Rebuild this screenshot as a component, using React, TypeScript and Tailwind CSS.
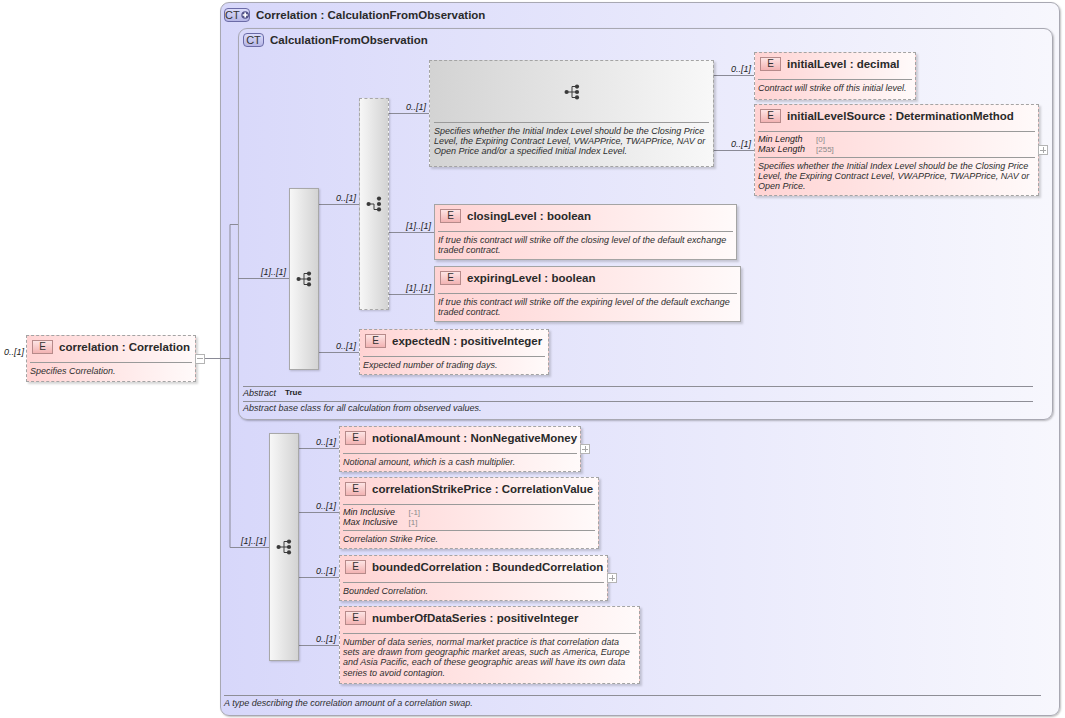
import React from "react";

type Facet = [string, string];

type ElementNode = {
  x: number;
  y: number;
  w: number;
  h: number;
  name: string;
  type: string;
  optional?: boolean;
  facets?: Facet[];
  desc: string[];
  expand?: "plus" | "minus";
};

const elements: ElementNode[] = [
  { x: 26, y: 335, w: 170, h: 47, name: "correlation", type: "Correlation", optional: true, desc: ["Specifies Correlation."], expand: "minus" },
  { x: 754, y: 52, w: 162, h: 48, name: "initialLevel", type: "decimal", optional: true, desc: ["Contract will strike off this initial level."] },
  {
    x: 754, y: 104, w: 285, h: 92, name: "initialLevelSource", type: "DeterminationMethod", optional: true,
    facets: [["Min Length", "[0]"], ["Max Length", "[255]"]],
    desc: [
      "Specifies whether the Initial Index Level should be the Closing Price",
      "Level, the Expiring Contract Level, VWAPPrice, TWAPPrice, NAV or",
      "Open Price.",
    ],
    expand: "plus",
  },
  {
    x: 434, y: 204, w: 303, h: 56, name: "closingLevel", type: "boolean",
    desc: ["If true this contract will strike off the closing level of the default exchange", "traded contract."],
  },
  {
    x: 434, y: 266, w: 307, h: 56, name: "expiringLevel", type: "boolean",
    desc: ["If true this contract will strike off the expiring level of the default exchange", "traded contract."],
  },
  { x: 359, y: 329, w: 190, h: 46, name: "expectedN", type: "positiveInteger", optional: true, desc: ["Expected number of trading days."] },
  { x: 339, y: 426, w: 242, h: 46, name: "notionalAmount", type: "NonNegativeMoney", optional: true, desc: ["Notional amount, which is a cash multiplier."], expand: "plus" },
  {
    x: 339, y: 477, w: 260, h: 72, name: "correlationStrikePrice", type: "CorrelationValue", optional: true,
    facets: [["Min Inclusive", "[-1]"], ["Max Inclusive", "[1]"]],
    desc: ["Correlation Strike Price."],
  },
  { x: 339, y: 555, w: 269, h: 46, name: "boundedCorrelation", type: "BoundedCorrelation", optional: true, desc: ["Bounded Correlation."], expand: "plus" },
  {
    x: 339, y: 606, w: 301, h: 78, name: "numberOfDataSeries", type: "positiveInteger", optional: true,
    desc: [
      "Number of data series, normal market practice is that correlation data",
      "sets are drawn from geographic market areas, such as America, Europe",
      "and Asia Pacific, each of these geographic areas will have its own data",
      "series to avoid contagion.",
    ],
  },
];

// connector lines, page coordinates
const lines: [number, number, number, number][] = [
  [205, 358, 230, 358],
  [230, 224, 230, 547],
  [230, 224, 238, 224],
  [230, 547, 269, 547],
  [238, 278, 289, 278],
  [319, 204, 359, 204],
  [319, 352, 359, 352],
  [389, 113, 429, 113],
  [389, 232, 434, 232],
  [389, 294, 434, 294],
  [713, 75, 754, 75],
  [713, 150, 754, 150],
  [298, 448, 339, 448],
  [298, 512, 339, 512],
  [298, 577, 339, 577],
  [298, 645, 339, 645],
];

const labels: { text: string; right: number; y: number }[] = [
  { text: "0..[1]", right: 24, y: 352 },
  { text: "[1]..[1]", right: 266, y: 541 },
  { text: "[1]..[1]", right: 286, y: 272 },
  { text: "0..[1]", right: 356, y: 198 },
  { text: "0..[1]", right: 356, y: 346 },
  { text: "0..[1]", right: 426, y: 107 },
  { text: "[1]..[1]", right: 431, y: 226 },
  { text: "[1]..[1]", right: 431, y: 288 },
  { text: "0..[1]", right: 751, y: 69 },
  { text: "0..[1]", right: 751, y: 144 },
  { text: "0..[1]", right: 336, y: 442 },
  { text: "0..[1]", right: 336, y: 506 },
  { text: "0..[1]", right: 336, y: 571 },
  { text: "0..[1]", right: 336, y: 639 },
];

const bars: { x: number; y: number; w: number; h: number; dashed?: boolean; choice?: boolean }[] = [
  { x: 289, y: 188, w: 30, h: 182 },
  { x: 359, y: 98, w: 30, h: 212, dashed: true, choice: true },
  { x: 269, y: 433, w: 30, h: 228 },
];

function SequenceIcon({ choice }: { choice?: boolean }) {
  return (
    <svg width="16" height="16" viewBox="0 0 16 16">
      <g stroke="#3a3a3a" strokeWidth="1" fill="none">
        {choice ? (
          <path d="M2.5 8H8V13.5H13" />
        ) : (
          <>
            <path d="M2.5 8H13" />
            <path d="M8 2.5V13.5" />
            <path d="M8 2.5H13M8 13.5H13" />
          </>
        )}
      </g>
      <g fill="#3a3a3a">
        <circle cx="2.6" cy="8" r="2.1" />
        <circle cx="13" cy="2.6" r="2.1" />
        <circle cx="13" cy="8" r="2.1" />
        <circle cx="13" cy="13.4" r="2.1" />
      </g>
    </svg>
  );
}

function ExpandBox({ kind }: { kind: "plus" | "minus" }) {
  return (
    <div className="absolute left-full top-1/2 -translate-y-1/2 flex h-[10px] w-[10px] items-center justify-center border border-[#b4b4b4] bg-white">
      <div className="relative h-[6px] w-[6px]">
        <div className="absolute left-0 top-[2.5px] h-px w-[6px] bg-[#a8a8a8]" />
        {kind === "plus" && <div className="absolute left-[2.5px] top-0 h-[6px] w-px bg-[#a8a8a8]" />}
      </div>
    </div>
  );
}

function Element({ node }: { node: ElementNode }) {
  return (
    <div
      className={`absolute border ${node.optional ? "border-dashed" : "border-solid"} border-[#a4a4a4] bg-linear-to-r from-[#ffd3d3] to-[#fffafa] px-[3px] pt-[4px] shadow-[2px_2px_2px_rgba(0,0,0,0.16)]`}
      style={{ left: node.x, top: node.y, width: node.w, height: node.h }}
    >
      <div className="flex items-center pl-[2px]">
        <div className="flex h-[14px] w-[21px] shrink-0 items-center justify-center border border-[#b68a8a] bg-linear-to-b from-[#fde4e4] to-[#f2b3b3] text-[10px] leading-none text-[#333]">
          E
        </div>
        <div className="ml-[6px] whitespace-nowrap text-[11.5px] font-bold leading-[14px] text-[#2a2a2a]">
          {node.name} : {node.type}
        </div>
      </div>
      <div className="mt-[8px] border-t border-[#9a9a9a]" />
      {node.facets && (
        <>
          <div className="grid w-fit grid-cols-[auto_auto] gap-x-[11px] pt-[3px] text-[9px] leading-[9.5px]">
            {node.facets.map(([k, v]) => (
              <React.Fragment key={k}>
                <span className="italic text-[#1e1e1e]">{k}</span>
                <span className="text-[8px] text-[#8a8a8a]">{v}</span>
              </React.Fragment>
            ))}
          </div>
          <div className="mt-[3px] border-t border-[#9a9a9a]" />
        </>
      )}
      <div className="pt-[2.5px] text-[9px] italic leading-[10.4px] text-[#2e2e2e]">
        {node.desc.map((d) => (
          <div key={d} className="whitespace-nowrap">
            {d}
          </div>
        ))}
      </div>
      {node.expand && <ExpandBox kind={node.expand} />}
    </div>
  );
}

function CtBadge({ plus }: { plus?: boolean }) {
  return (
    <div
      className={`flex h-[14px] ${plus ? "w-[26px]" : "w-[21px]"} items-center justify-center gap-[1px] rounded-[4px] border border-[#6b6ba6] bg-linear-to-b from-[#dcdcfa] to-[#b6b6e6] text-[11px] leading-none text-[#333]`}
    >
      <span>CT</span>
      {plus && (
        <svg width="10" height="10" viewBox="0 0 10 10">
          <circle cx="5" cy="5" r="4.6" fill="#55558a" />
          <path d="M5 2V8M2 5H8" stroke="#ffffff" strokeWidth="2" />
        </svg>
      )}
    </div>
  );
}

export default function App() {
  return (
    <div className="relative h-[718px] w-[1065px] overflow-hidden bg-white font-['Liberation_Sans',Arial,sans-serif]">
      {/* outer complex type */}
      <div className="absolute left-[220px] top-[2px] flex h-[714px] w-[840px] flex-col rounded-[9px] border border-[#a8a8b2] bg-linear-to-r from-[#d7d7fa] to-[#f7f7fd] shadow-[1px_1px_2px_rgba(0,0,0,0.25)]">
        <div className="flex items-center gap-[6px] pl-[3px] pt-[5px]">
          <CtBadge plus />
          <span className="text-[11.5px] font-bold leading-[14px] text-[#2a2a2a]">
            Correlation : CalculationFromObservation
          </span>
        </div>
        <div className="flex-1" />
        <div className="ml-[3px] mr-[18px] border-t border-[#8e8e96] pb-[7px] pt-[2px] text-[9px] italic leading-[10px] text-[#2e2e2e]">
          A type describing the correlation amount of a correlation swap.
        </div>
      </div>

      {/* inner complex type */}
      <div className="absolute left-[238px] top-[28px] flex h-[392px] w-[815px] flex-col rounded-[9px] border border-[#a8a8b2] bg-linear-to-r from-[#d9d9fa] to-[#f7f7fd] shadow-[1px_1px_2px_rgba(0,0,0,0.25)]">
        <div className="flex items-center gap-[6px] pl-[4px] pt-[4px]">
          <CtBadge />
          <span className="text-[11.5px] font-bold leading-[14px] text-[#2a2a2a]">CalculationFromObservation</span>
        </div>
        <div className="flex-1" />
        <div className="ml-[4px] mr-[19px] border-t border-[#8e8e96]">
          <div className="flex items-center gap-[9px] pb-[3px] pt-[1px] leading-[10px]">
            <span className="text-[9px] italic text-[#1e1e1e]">Abstract</span>
            <span className="text-[8px] font-bold text-[#1e1e1e]">True</span>
          </div>
          <div className="border-t border-[#8e8e96] pb-[6px] pt-[1px] text-[9px] italic leading-[10px] text-[#2e2e2e]">
            Abstract base class for all calculation from observed values.
          </div>
        </div>
      </div>

      {/* connectors */}
      <svg className="pointer-events-none absolute left-0 top-0" width="1065" height="718">
        {lines.map(([x1, y1, x2, y2], i) => (
          <line key={i} x1={x1} y1={y1 + 0.5} x2={x2} y2={y2 + 0.5} stroke="#8a8a96" strokeWidth="1" />
        ))}
      </svg>

      {/* sequence compositors */}
      {bars.map((b, i) => (
        <div
          key={i}
          className={`absolute flex items-center justify-center border ${b.dashed ? "border-dashed" : "border-solid"} border-[#a8a8a8] bg-linear-to-r from-[#f7f7f7] to-[#d3d3d3] shadow-[1px_1px_2px_rgba(0,0,0,0.18)]`}
          style={{ left: b.x, top: b.y, width: b.w, height: b.h }}
        >
          <SequenceIcon choice={b.choice} />
        </div>
      ))}

      {/* group */}
      <div className="absolute left-[429px] top-[60px] flex h-[107px] w-[285px] flex-col border border-dashed border-[#a4a4a4] bg-linear-to-r from-[#d3d3d3] to-[#f8f8f8] shadow-[2px_2px_2px_rgba(0,0,0,0.16)]">
        <div className="flex h-[61px] items-center justify-center">
          <SequenceIcon />
        </div>
        <div className="mx-[4px] border-t border-[#9a9a9a] pt-[3px] text-[9px] italic leading-[10px] text-[#2e2e2e]">
          <div className="whitespace-nowrap">Specifies whether the Initial Index Level should be the Closing Price</div>
          <div className="whitespace-nowrap">Level, the Expiring Contract Level, VWAPPrice, TWAPPrice, NAV or</div>
          <div className="whitespace-nowrap">Open Price and/or a specified Initial Index Level.</div>
        </div>
      </div>

      {elements.map((n) => (
        <Element key={n.name} node={n} />
      ))}

      {labels.map((l, i) => (
        <div
          key={i}
          className="absolute whitespace-nowrap text-[9px] italic leading-[10px] text-[#222]"
          style={{ right: 1065 - l.right, top: l.y - 5 }}
        >
          {l.text}
        </div>
      ))}
    </div>
  );
}
